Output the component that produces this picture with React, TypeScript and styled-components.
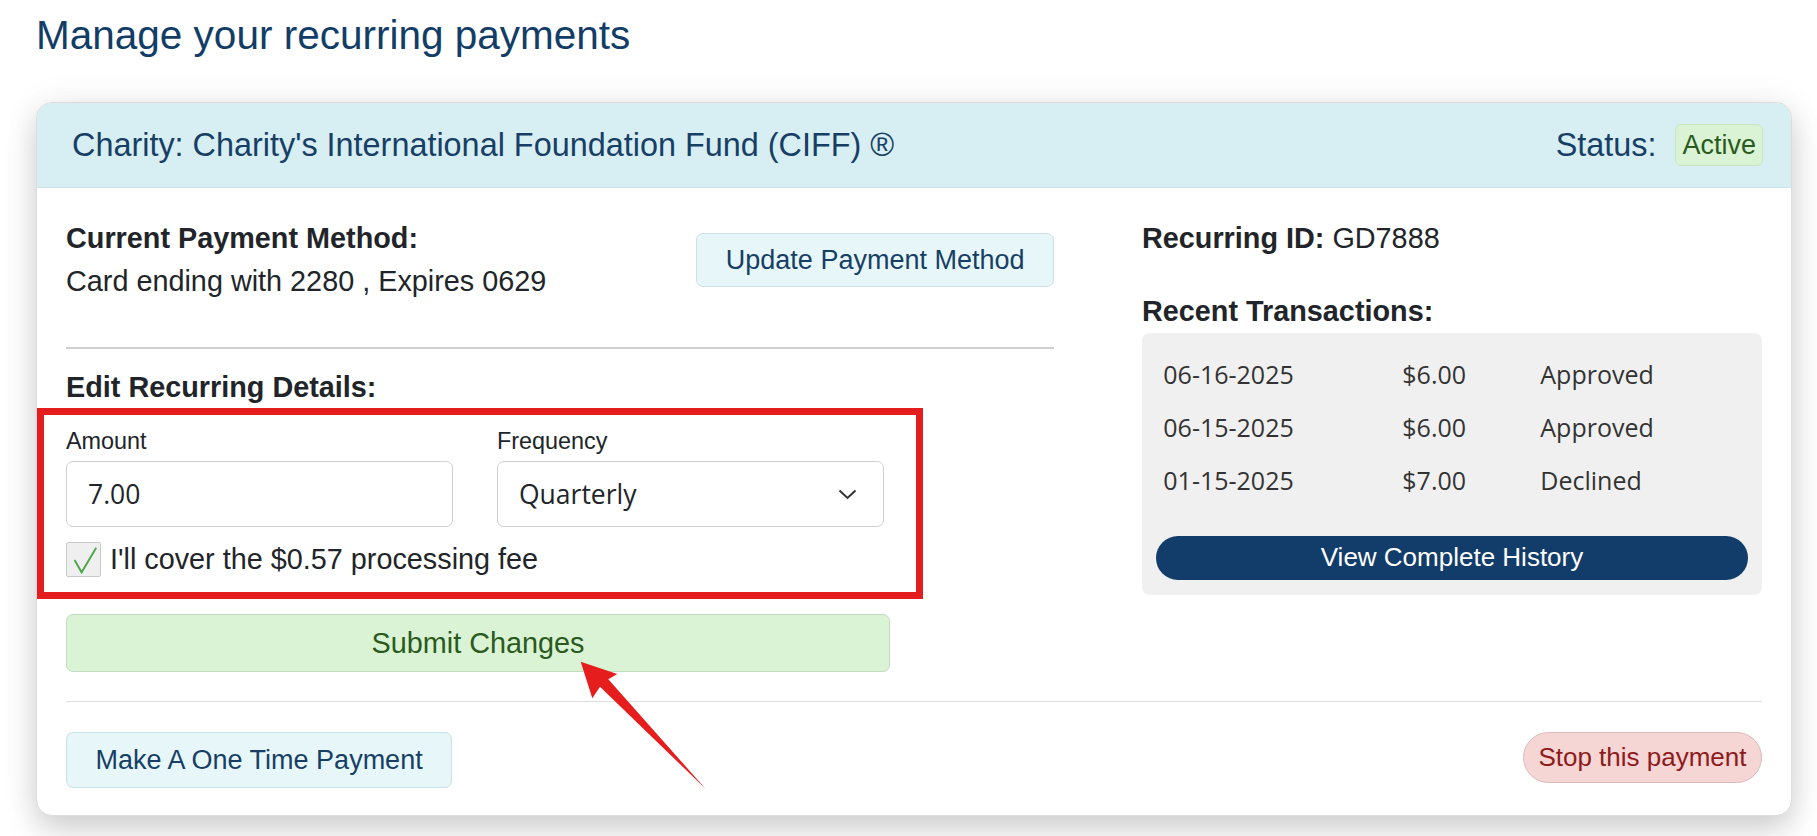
import React from 'react'
import styled, { createGlobalStyle } from 'styled-components'

const GlobalStyle = createGlobalStyle`
  html, body {
    margin: 0;
    padding: 0;
    background: #fff;
  }
  body {
    font-family: 'Liberation Sans', Arial, sans-serif;
    color: #212529;
  }
  * {
    box-sizing: border-box;
  }
`

const Page = styled.div`
  position: relative;
  width: 1817px;
  height: 836px;
  overflow: hidden;
  padding: 10.5px 0 0 36px;
`

const Title = styled.h1`
  margin: 0 0 43.5px;
  font-size: 40.5px;
  font-weight: 400;
  line-height: 48px;
  color: #123d67;
`

const Card = styled.section`
  width: 1756px;
  background: #fff;
  border: 1px solid #dcdcdc;
  border-radius: 16px;
  overflow: hidden;
  box-shadow: 0 14px 30px rgba(0, 0, 0, 0.17), 0 0 38px rgba(0, 0, 0, 0.06);
`

const CardHeader = styled.header`
  display: flex;
  align-items: center;
  justify-content: space-between;
  height: 85px;
  padding: 0 28px 0 35px;
  background: #d7eef3;
  border-bottom: 1px solid #cde1e6;
  color: #173f66;
  font-size: 32.4px;
`

const Status = styled.div`
  display: flex;
  align-items: center;
  gap: 19px;
`

const Badge = styled.span`
  height: 42px;
  padding: 0 6px;
  line-height: 40px;
  font-size: 27px;
  color: #2a5a20;
  background: #d9f3d4;
  border: 1px solid #c8e5c1;
  border-radius: 6px;
`

const CardBody = styled.div`
  padding: 29px 29px 27px;
`

const Columns = styled.div`
  display: grid;
  grid-template-columns: 988px 1fr;
  column-gap: 88px;
  align-items: start;
`

const MethodRow = styled.div`
  display: flex;
  align-items: center;
  justify-content: space-between;
`

const Strong = styled.div`
  font-size: 28.8px;
  font-weight: 700;
  line-height: 43.2px;
`

const Text = styled.div`
  font-size: 28.8px;
  line-height: 43.2px;
`

const Regular = styled.span`
  font-weight: 400;
`

const LightButton = styled.button<{ $h: number }>`
  height: ${(p) => p.$h}px;
  padding: 0 28.5px;
  font-family: inherit;
  font-size: 27px;
  color: #173f66;
  background: #e7f6f9;
  border: 1px solid #c9e1e7;
  border-radius: 7px;
`

const Rule = styled.hr<{ $top: number; $bottom: number; $w: number; $c: string }>`
  margin: ${(p) => p.$top}px 0 ${(p) => p.$bottom}px;
  border: 0;
  border-top: ${(p) => p.$w}px solid ${(p) => p.$c};
`

const FieldGrid = styled.div`
  display: grid;
  grid-template-columns: 387px 387px;
  column-gap: 44px;
  margin-top: 17.6px;
`

const Label = styled.div`
  margin-bottom: 6px;
  font-size: 23.4px;
  line-height: 28px;
`

const Input = styled.input`
  display: block;
  width: 100%;
  height: 65.7px;
  padding: 0 21px;
  font-family: 'Open Sans', 'Noto Sans', sans-serif;
  font-size: 26.5px;
  color: #212529;
  border: 1px solid #cfcfcf;
  border-radius: 7px;
  outline: none;
`

const SelectBox = styled.div`
  display: flex;
  align-items: center;
  justify-content: space-between;
  height: 65.7px;
  padding: 0 26px 0 21px;
  font-family: 'Open Sans', 'Noto Sans', sans-serif;
  font-size: 26.5px;
  color: #212529;
  border: 1px solid #cfcfcf;
  border-radius: 7px;
`

const CheckRow = styled.label`
  display: flex;
  align-items: center;
  gap: 9px;
  margin-top: 15.6px;
  font-size: 28.8px;
  line-height: 35px;
`

const CheckBox = styled.span`
  display: flex;
  width: 35px;
  height: 35px;
  background: #efefef;
  border: 1px solid #c9c9c9;
  border-radius: 2px;
`

const SubmitButton = styled.button`
  display: block;
  width: 824px;
  height: 58px;
  margin-top: 37px;
  font-family: inherit;
  font-size: 28.8px;
  color: #2a5a20;
  background: #d9f3d4;
  border: 1px solid #c3dcbf;
  border-radius: 7px;
`

const Gap = styled.div`
  height: 30px;
`

const TxBox = styled.div`
  padding: 13.7px 14px 15px;
  background: #f0f0f0;
  border-radius: 8px;
`

const TxRow = styled.div`
  display: grid;
  grid-template-columns: 239px 138px 1fr;
  align-items: center;
  height: 53px;
  padding-left: 7.3px;
  font-family: 'Open Sans', 'Noto Sans', sans-serif;
  font-size: 25px;
  color: #333;
`

const HistoryButton = styled.button`
  display: block;
  width: 100%;
  height: 44px;
  margin-top: 29.6px;
  font-family: inherit;
  font-size: 26px;
  color: #fff;
  background: #123d6a;
  border: 0;
  border-radius: 22px;
`

const Footer = styled.div`
  display: flex;
  align-items: flex-start;
  justify-content: space-between;
`

const StopButton = styled.button`
  height: 51px;
  padding: 0 14.5px;
  font-family: inherit;
  font-size: 26px;
  color: #8e1b1b;
  background: #f6d5d5;
  border: 1px solid #dbbaba;
  border-radius: 26px;
`

// annotation drawn over the screenshot
const Highlight = styled.div`
  position: absolute;
  left: 37px;
  top: 408px;
  width: 886px;
  height: 191px;
  border: 7px solid #e41e1e;
  pointer-events: none;
`

const Arrow = styled.svg`
  position: absolute;
  left: 575px;
  top: 655px;
  pointer-events: none;
`

const transactions = [
  { date: '06-16-2025', amount: '$6.00', status: 'Approved' },
  { date: '06-15-2025', amount: '$6.00', status: 'Approved' },
  { date: '01-15-2025', amount: '$7.00', status: 'Declined' },
]

const App = () => {
  return (
    <Page>
      <GlobalStyle />
      <Title>Manage your recurring payments</Title>
      <Card>
        <CardHeader>
          <span>Charity: Charity's International Foundation Fund (CIFF) ®</span>
          <Status>
            <span>Status:</span>
            <Badge>Active</Badge>
          </Status>
        </CardHeader>
        <CardBody>
          <Columns>
            <div>
              <MethodRow>
                <div>
                  <Strong>Current Payment Method:</Strong>
                  <Text>Card ending with 2280 , Expires 0629</Text>
                </div>
                <LightButton $h={54}>Update Payment Method</LightButton>
              </MethodRow>
              <Rule $top={44} $bottom={17} $w={2} $c='#cfcfcf' />
              <Strong>Edit Recurring Details:</Strong>
              <FieldGrid>
                <div>
                  <Label>Amount</Label>
                  <Input defaultValue='7.00' />
                </div>
                <div>
                  <Label>Frequency</Label>
                  <SelectBox>
                    <span>Quarterly</span>
                    <svg width='19' height='11' viewBox='0 0 19 11'>
                      <polyline points='1.5,1.5 9.5,9 17.5,1.5' fill='none' stroke='#333' strokeWidth='2' />
                    </svg>
                  </SelectBox>
                </div>
              </FieldGrid>
              <CheckRow>
                <CheckBox>
                  <svg width='35' height='35' viewBox='0 0 35 35'>
                    <path d='M8 17 L15.5 30 L31 4' fill='none' stroke='#4aa64a' strokeWidth='2' />
                  </svg>
                </CheckBox>
                I'll cover the $0.57 processing fee
              </CheckRow>
              <SubmitButton>Submit Changes</SubmitButton>
            </div>
            <div>
              <Strong>
                Recurring ID: <Regular>GD7888</Regular>
              </Strong>
              <Gap />
              <Strong>Recent Transactions:</Strong>
              <TxBox>
                {transactions.map((t) => (
                  <TxRow key={t.date}>
                    <span>{t.date}</span>
                    <span>{t.amount}</span>
                    <span>{t.status}</span>
                  </TxRow>
                ))}
                <HistoryButton>View Complete History</HistoryButton>
              </TxBox>
            </div>
          </Columns>
          <Rule $top={29} $bottom={30} $w={1.5} $c='#dedede' />
          <Footer>
            <LightButton $h={56}>Make A One Time Payment</LightButton>
            <StopButton>Stop this payment</StopButton>
          </Footer>
        </CardBody>
      </Card>
      <Highlight />
      <Arrow width='140' height='140' viewBox='0 0 140 140'>
        <polygon points='5.7,6.7 42.3,19 33.3,24.3 130.7,134 25,31.7 17.3,43.3' fill='#e51d1d' />
      </Arrow>
    </Page>
  )
}

export default App
